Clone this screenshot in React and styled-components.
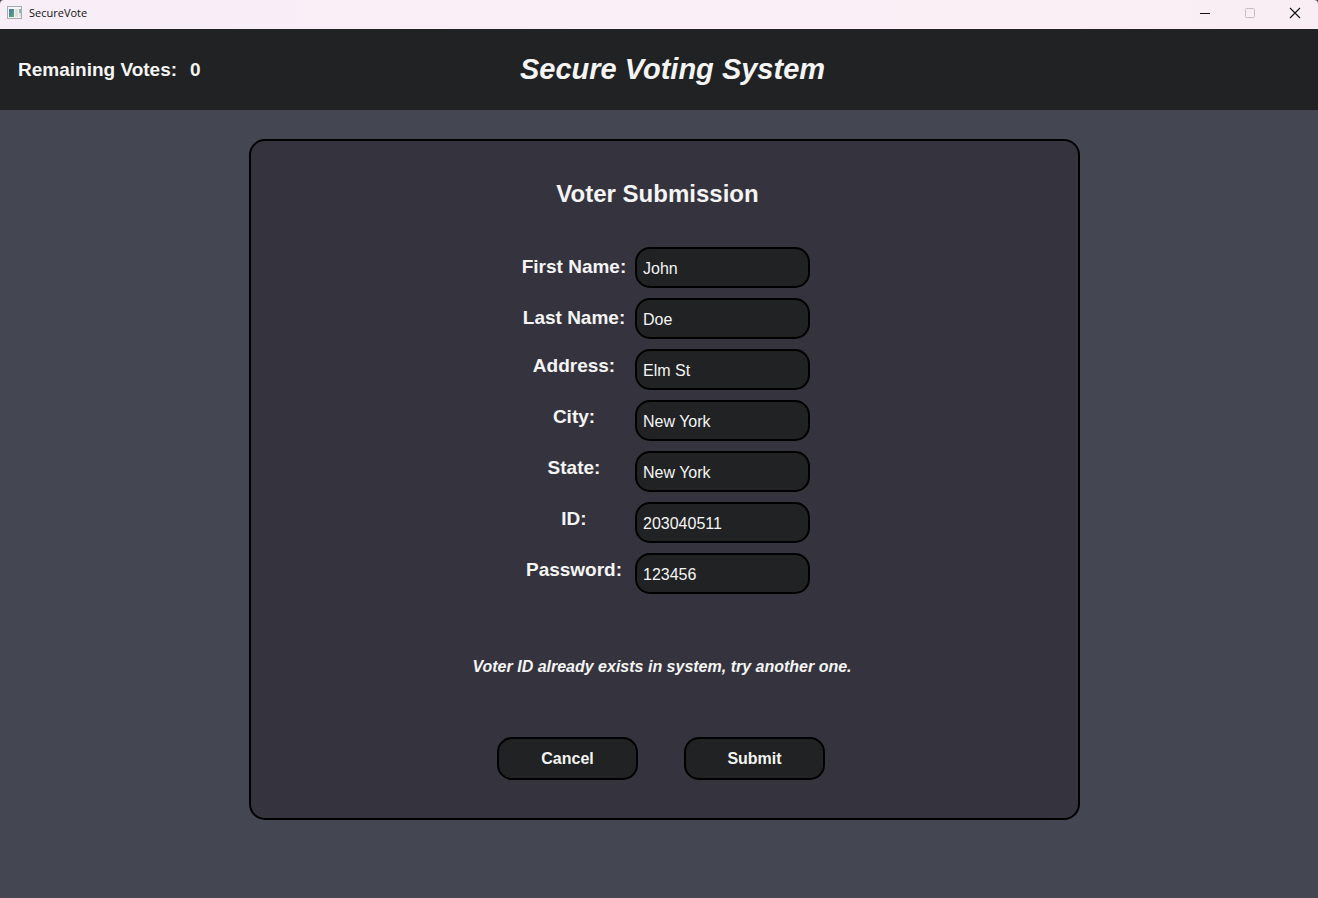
import React, { useState } from "react";
import styled, { createGlobalStyle } from "styled-components";

const GlobalStyle = createGlobalStyle`
  *, *::before, *::after { box-sizing: border-box; }
  body {
    margin: 0;
    background: #51424f;
    font-family: "Liberation Sans", Arial, sans-serif;
  }
`;

const Window = styled.div`
  display: flex;
  flex-direction: column;
  min-height: 100vh;
  overflow: hidden;
  border-radius: 4px;
  background: #444652;
  color: #f5f5f5;
`;

const TitleBar = styled.div`
  display: flex;
  align-items: center;
  height: 29px;
  padding: 0 0 3px 7px;
  background: linear-gradient(90deg, #f8eef8, #faeff5 70%, #f8eef3);
  color: #111;
`;

const AppName = styled.span`
  flex: 1;
  margin-left: 6px;
  font: 11px/16px "Open Sans", "Noto Sans", sans-serif;
`;

const WindowControls = styled.div`
  display: flex;
  padding-right: 1px;
`;

const WindowButton = styled.button`
  display: flex;
  align-items: center;
  justify-content: center;
  width: 45px;
  height: 26px;
  padding: 0;
  border: 0;
  background: none;
  color: #111;

  &:disabled { color: #c5bdc2; }
`;

const Header = styled.header`
  display: grid;
  grid-template-columns: 1fr auto 1fr;
  align-items: center;
  height: 81px;
  padding: 0 18px;
  background: #202223;
`;

const VoteCount = styled.div`
  display: flex;
  gap: 13px;
  font-size: 19px;
  line-height: 24px;
  font-weight: bold;
`;

const AppTitle = styled.h1`
  margin: 0;
  padding: 0 0 2px 27px;
  font-size: 29px;
  line-height: 36px;
  font-style: italic;
`;

const Main = styled.main`
  display: flex;
  flex: 1;
  align-items: flex-start;
  justify-content: center;
  padding: 29px 0 29px 11px;
`;

const Card = styled.form`
  display: flex;
  flex-direction: column;
  align-items: center;
  width: 100%;
  max-width: 831px;
  padding: 37px 0 38px;
  border: 2px solid #000;
  border-radius: 16px;
  background: #35343e;
`;

const CardTitle = styled.h2`
  margin: 0 0 37px;
  padding-right: 14px;
  font-size: 24px;
  line-height: 32px;
`;

const Fields = styled.div`
  display: flex;
  flex-direction: column;
  gap: 10px;
  padding-left: 2px;
`;

const Field = styled.div`
  display: grid;
  grid-template-columns: 106px 175px;
  column-gap: 8px;
  align-items: center;
`;

const Label = styled.label`
  padding-bottom: ${({ $raised }) => ($raised ? 8 : 2)}px;
  font-size: 19px;
  line-height: 24px;
  font-weight: bold;
  text-align: center;
  white-space: nowrap;
`;

const TextInput = styled.input`
  width: 100%;
  height: 41px;
  padding: 2px 6px 0;
  border: 2px solid #000;
  border-radius: 15px;
  outline: none;
  background: #202223;
  color: #f5f5f5;
  font: 16px "Liberation Sans", Arial, sans-serif;
`;

const Message = styled.p`
  margin: 63px 0 60px;
  padding-right: 5px;
  font-size: 16px;
  line-height: 20px;
  font-weight: bold;
  font-style: italic;
`;

const Actions = styled.div`
  display: flex;
  gap: 46px;
  padding-right: 7px;
`;

const ActionButton = styled.button`
  width: 141px;
  height: 43px;
  padding: 0;
  border: 2px solid #000;
  border-radius: 15px;
  background: #202223;
  color: #f5f5f5;
  font: bold 16px "Liberation Sans", Arial, sans-serif;
`;

const FIELDS = [
  { id: "firstName", label: "First Name:", value: "John" },
  { id: "lastName", label: "Last Name:", value: "Doe" },
  { id: "address", label: "Address:", value: "Elm St", raised: true },
  { id: "city", label: "City:", value: "New York", raised: true },
  { id: "state", label: "State:", value: "New York", raised: true },
  { id: "voterId", label: "ID:", value: "203040511", raised: true },
  { id: "password", label: "Password:", value: "123456", raised: true },
];

function AppIcon() {
  return (
    <svg width="16" height="14" viewBox="0 0 16 14" aria-hidden="true">
      <defs>
        <linearGradient id="pane" x1="0" y1="0" x2="1" y2="1">
          <stop offset="0" stopColor="#4a78a8" />
          <stop offset="1" stopColor="#55a878" />
        </linearGradient>
      </defs>
      <rect x="0.5" y="0.5" width="14" height="12" fill="#f6f6f6" stroke="#a9a9ad" />
      <rect x="2" y="3" width="5" height="8" fill="url(#pane)" />
      <rect x="8" y="3" width="3" height="8" fill="#dedede" />
      <rect x="12" y="3" width="2" height="4" fill="#86bda5" />
      <rect x="12" y="7" width="2" height="4" fill="#e2e2e2" />
    </svg>
  );
}

export default function App() {
  const [values, setValues] = useState(() =>
    Object.fromEntries(FIELDS.map((f) => [f.id, f.value]))
  );

  return (
    <>
      <GlobalStyle />
      <Window>
        <TitleBar>
          <AppIcon />
          <AppName>SecureVote</AppName>
          <WindowControls>
            <WindowButton type="button" aria-label="Minimize">
              <svg width="12" height="12" aria-hidden="true">
                <path d="M1 6.5H11" stroke="currentColor" />
              </svg>
            </WindowButton>
            <WindowButton type="button" aria-label="Maximize" disabled>
              <svg width="12" height="12" aria-hidden="true">
                <rect x="1.5" y="1.5" width="9" height="9" rx="1" fill="none" stroke="currentColor" />
              </svg>
            </WindowButton>
            <WindowButton type="button" aria-label="Close">
              <svg width="12" height="12" aria-hidden="true">
                <path d="M1 1L11 11M11 1L1 11" stroke="currentColor" strokeWidth="1.1" />
              </svg>
            </WindowButton>
          </WindowControls>
        </TitleBar>
        <Header>
          <VoteCount>
            <span>Remaining Votes:</span>
            <span>0</span>
          </VoteCount>
          <AppTitle>Secure Voting System</AppTitle>
        </Header>
        <Main>
          <Card onSubmit={(e) => e.preventDefault()}>
            <CardTitle>Voter Submission</CardTitle>
            <Fields>
              {FIELDS.map(({ id, label, raised }) => (
                <Field key={id}>
                  <Label htmlFor={id} $raised={raised}>{label}</Label>
                  <TextInput
                    id={id}
                    type="text"
                    value={values[id]}
                    onChange={(e) => setValues({ ...values, [id]: e.target.value })}
                  />
                </Field>
              ))}
            </Fields>
            <Message role="alert">Voter ID already exists in system, try another one.</Message>
            <Actions>
              <ActionButton type="button">Cancel</ActionButton>
              <ActionButton type="submit">Submit</ActionButton>
            </Actions>
          </Card>
        </Main>
      </Window>
    </>
  );
}
